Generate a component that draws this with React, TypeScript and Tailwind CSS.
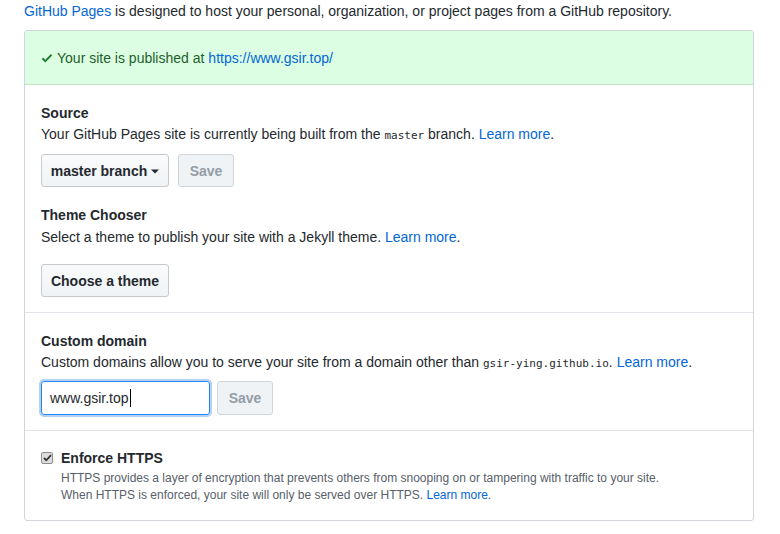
import React from "react";

const font = { fontFamily: '"Liberation Sans", Arial, sans-serif' };

function Btn({ children, disabled, className = "" }: { children: React.ReactNode; disabled?: boolean; className?: string }) {
  return (
    <div
      className={
        "flex h-[33px] items-center justify-center rounded-[3px] border text-[14px] font-semibold leading-5 " +
        (disabled
          ? "border-[#d1d5da] bg-[#eff3f6] text-[#959da5] "
          : "border-[#c6cacd] bg-gradient-to-b from-[#fafbfc] to-[#eff3f6] text-[#24292e] ") +
        className
      }
    >
      {children}
    </div>
  );
}

export default function App() {
  const link = "text-[#0366d6]";
  const mono = { fontFamily: '"DejaVu Sans Mono", "Liberation Mono", monospace' };
  return (
    <div className="h-[534px] w-[780px] bg-white text-[14px] leading-5 text-[#24292e]" style={font}>
      <div className="pl-[24px] pt-[1px]">
        <p className="h-[29px]">
          <span className={link}>GitHub Pages</span> is designed to host your personal, organization, or project pages from a GitHub repository.
        </p>
        <div className="w-[730px] rounded-[3px] border border-[#d1d5da]">
          <div className="flex h-[54px] items-center border-b border-[#bfe5bf] bg-[#dcffe4] px-[16px] text-[#165c26]">
            <svg width="12" height="14" viewBox="0 0 12 16" className="mr-[4px] mt-[1px]" fill="#1e7e34">
              <path fillRule="evenodd" d="M12 5l-8 8-4-4 1.5-1.5L4 10l6.5-6.5L12 5z" />
            </svg>
            <span className="text-[#1e5e2a]">Your site is published at </span>
            <span className={"ml-[4px] " + link}>https://www.gsir.top/</span>
          </div>

          <div className="border-b border-[#e1e4e8] px-[16px] pb-[15px] pt-[18px]">
            <div className="font-semibold">Source</div>
            <div className="mt-[1px]">
              Your GitHub Pages site is currently being built from the{" "}
              <span className="text-[11px]" style={mono}>master</span> branch.{" "}
              <span className={link}>Learn more</span>.
            </div>
            <div className="mt-[8px] flex gap-[9px]">
              <Btn className="w-[128px]">
                master branch
                <svg width="8" height="5" viewBox="0 0 8 4" className="ml-[4px] mt-[1px]" fill="#24292e">
                  <path d="M0 0h8L4 4z" />
                </svg>
              </Btn>
              <Btn disabled className="w-[56px]">Save</Btn>
            </div>
            <div className="mt-[18px] font-semibold">Theme Chooser</div>
            <div className="mt-[2px]">
              Select a theme to publish your site with a Jekyll theme. <span className={link}>Learn more</span>.
            </div>
            <div className="mt-[17px] flex">
              <Btn className="w-[128px]">Choose a theme</Btn>
            </div>
          </div>

          <div className="border-b border-[#e1e4e8] px-[16px] pb-[15px] pt-[18px]">
            <div className="font-semibold">Custom domain</div>
            <div className="mt-[1px]">
              Custom domains allow you to serve your site from a domain other than{" "}
              <span className="text-[11px]" style={mono}>gsir-ying.github.io</span>.{" "}
              <span className={link}>Learn more</span>.
            </div>
            <div className="mt-[7px] flex gap-[7px]">
              <div className="flex h-[34px] w-[169px] items-center rounded-[3px] border border-[#2188ff] px-[8px] shadow-[0_0_0_2px_rgba(3,102,214,0.3)]">
                <span>www.gsir.top</span>
                <span className="ml-[1px] h-[18px] w-[1px] bg-black" />
              </div>
              <Btn disabled className="h-[34px] w-[56px]">Save</Btn>
            </div>
          </div>

          <div className="px-[16px] pb-[16px] pt-[17px]">
            <div className="flex items-center">
              <div className="flex h-[12px] w-[12px] items-center justify-center rounded-[2px] border border-[#8f8f8f] bg-[#dcdcdc]">
                <svg width="9" height="8" viewBox="0 0 9 8" fill="none" stroke="#333" strokeWidth="1.8">
                  <path d="M1 4l2.3 2.3L8 1.2" />
                </svg>
              </div>
              <span className="ml-[8px] font-semibold">Enforce HTTPS</span>
            </div>
            <div className="ml-[20px] mt-[2px] text-[12px] leading-[17px] text-[#586069]">
              <div>HTTPS provides a layer of encryption that prevents others from snooping on or tampering with traffic to your site.</div>
              <div>
                When HTTPS is enforced, your site will only be served over HTTPS. <span className={link}>Learn more</span>.
              </div>
            </div>
          </div>
        </div>
      </div>
    </div>
  );
}
